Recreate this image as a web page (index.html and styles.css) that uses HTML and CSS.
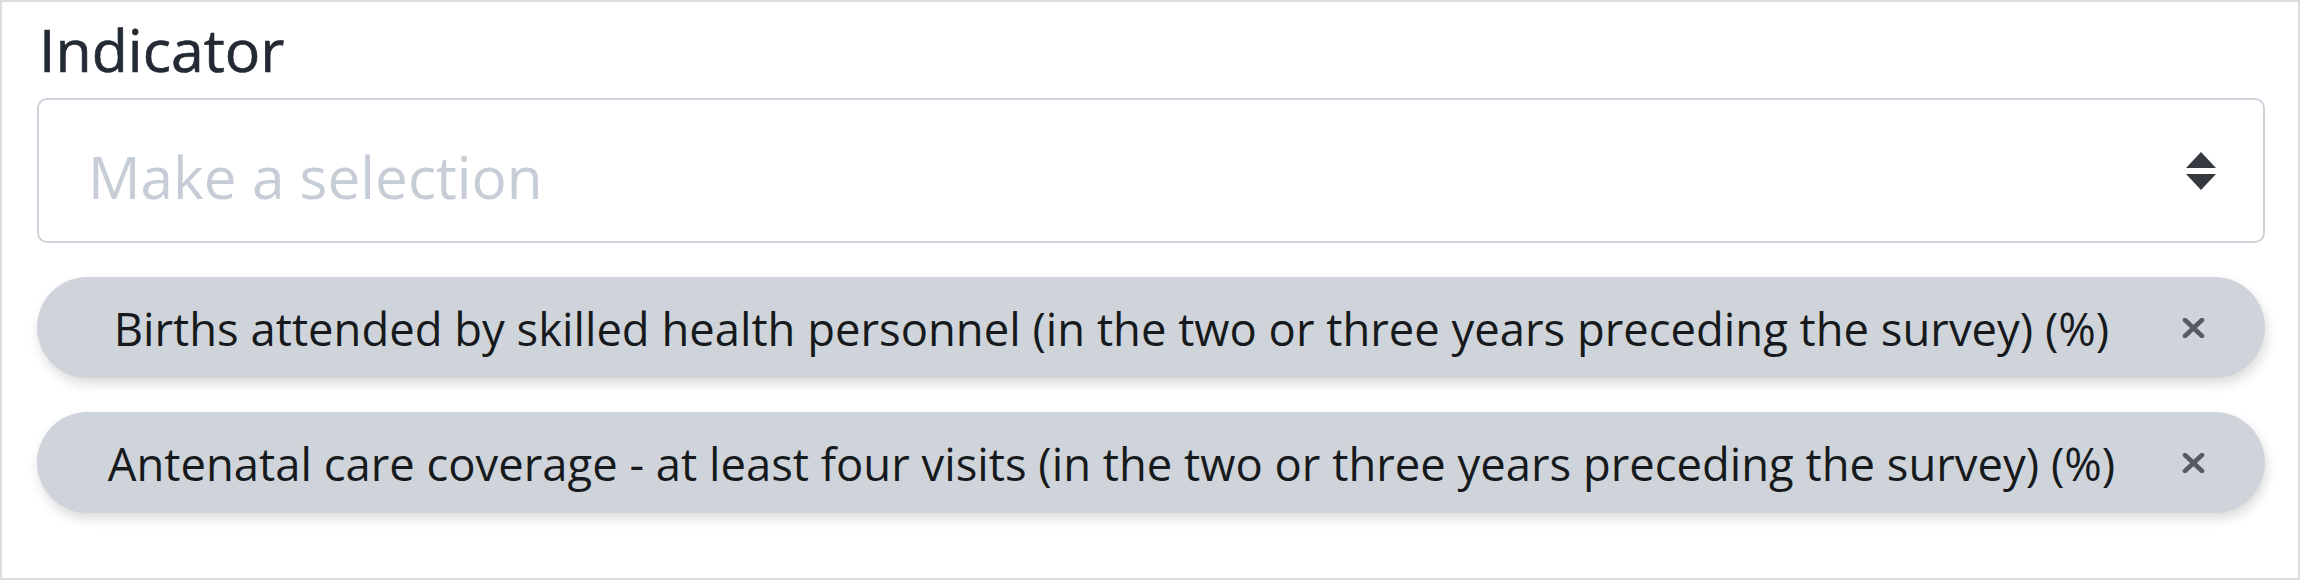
FILE: index.html
```html
<!DOCTYPE html>
<html lang="en">
<head>
<meta charset="utf-8">
<title>Indicator</title>
<link rel="stylesheet" href="styles.css">
</head>
<body>
<div class="panel">
  <div class="label">Indicator</div>
  <div class="select">
    <span class="placeholder">Make a selection</span>
    <svg class="arrows" width="32" height="40" viewBox="0 0 32 40" aria-hidden="true">
      <path d="M16 1 L31 17 L1 17 Z" fill="#343a40"/>
      <path d="M1 23 L31 23 L16 39 Z" fill="#343a40"/>
    </svg>
  </div>
  <div class="chips">
    <div class="chip">
      <span class="chip-text">Births attended by skilled health personnel (in the two or three years preceding the survey) (%)</span>
      <span class="chip-remove" aria-label="remove">
        <svg width="23" height="20" viewBox="0 0 23 20"><path d="M3 2 L20 18 M20 2 L3 18" stroke="#555b61" stroke-width="4.5" stroke-linecap="round"/></svg>
      </span>
    </div>
    <div class="chip">
      <span class="chip-text">Antenatal care coverage - at least four visits (in the two or three years preceding the survey) (%)</span>
      <span class="chip-remove" aria-label="remove">
        <svg width="23" height="20" viewBox="0 0 23 20"><path d="M3 2 L20 18 M20 2 L3 18" stroke="#555b61" stroke-width="4.5" stroke-linecap="round"/></svg>
      </span>
    </div>
  </div>
</div>
</body>
</html>
```
FILE: styles.css
```css
html, body {
  margin: 0;
  padding: 0;
  background: #ffffff;
}

body {
  font-family: "Open Sans", "Noto Sans", "Liberation Sans", sans-serif;
  color: #212529;
}

.panel {
  box-sizing: border-box;
  width: 2300px;
  height: 580px;
  border: 2px solid #dcdcdc;
  padding: 7px 33px 0 35px;
}

.label {
  font-size: 59px;
  font-weight: 400;
  line-height: 80px;
  color: #232a33;
  padding-left: 2px;
  margin-bottom: 9px;
  -webkit-text-stroke: 0.6px #232a33;
}

.select {
  box-sizing: border-box;
  height: 145px;
  border: 2px solid #cdd3da;
  border-radius: 10px;
  display: flex;
  align-items: center;
  justify-content: space-between;
  padding: 10px 46px 0 49px;
}

.placeholder {
  font-size: 58.5px;
  color: #c6cdd6;
}

.arrows {
  display: block;
  margin-top: -10px;
}

.chips {
  display: flex;
  flex-direction: column;
  gap: 34px;
  margin-top: 34px;
}

.chip {
  box-sizing: border-box;
  height: 101px;
  border-radius: 51px;
  background: #cfd4db;
  display: flex;
  align-items: center;
  padding: 0 28px 0 36px;
  box-shadow: 2px 6px 12px rgba(0, 0, 0, 0.14);
}

.chip-text {
  flex: 1;
  text-align: center;
  font-size: 45.4px;
  white-space: nowrap;
  color: #171a1d;
}

.chip-remove {
  width: 87px;
  display: flex;
  justify-content: center;
  align-items: center;
}

.chip-remove svg {
  display: block;
}
```
